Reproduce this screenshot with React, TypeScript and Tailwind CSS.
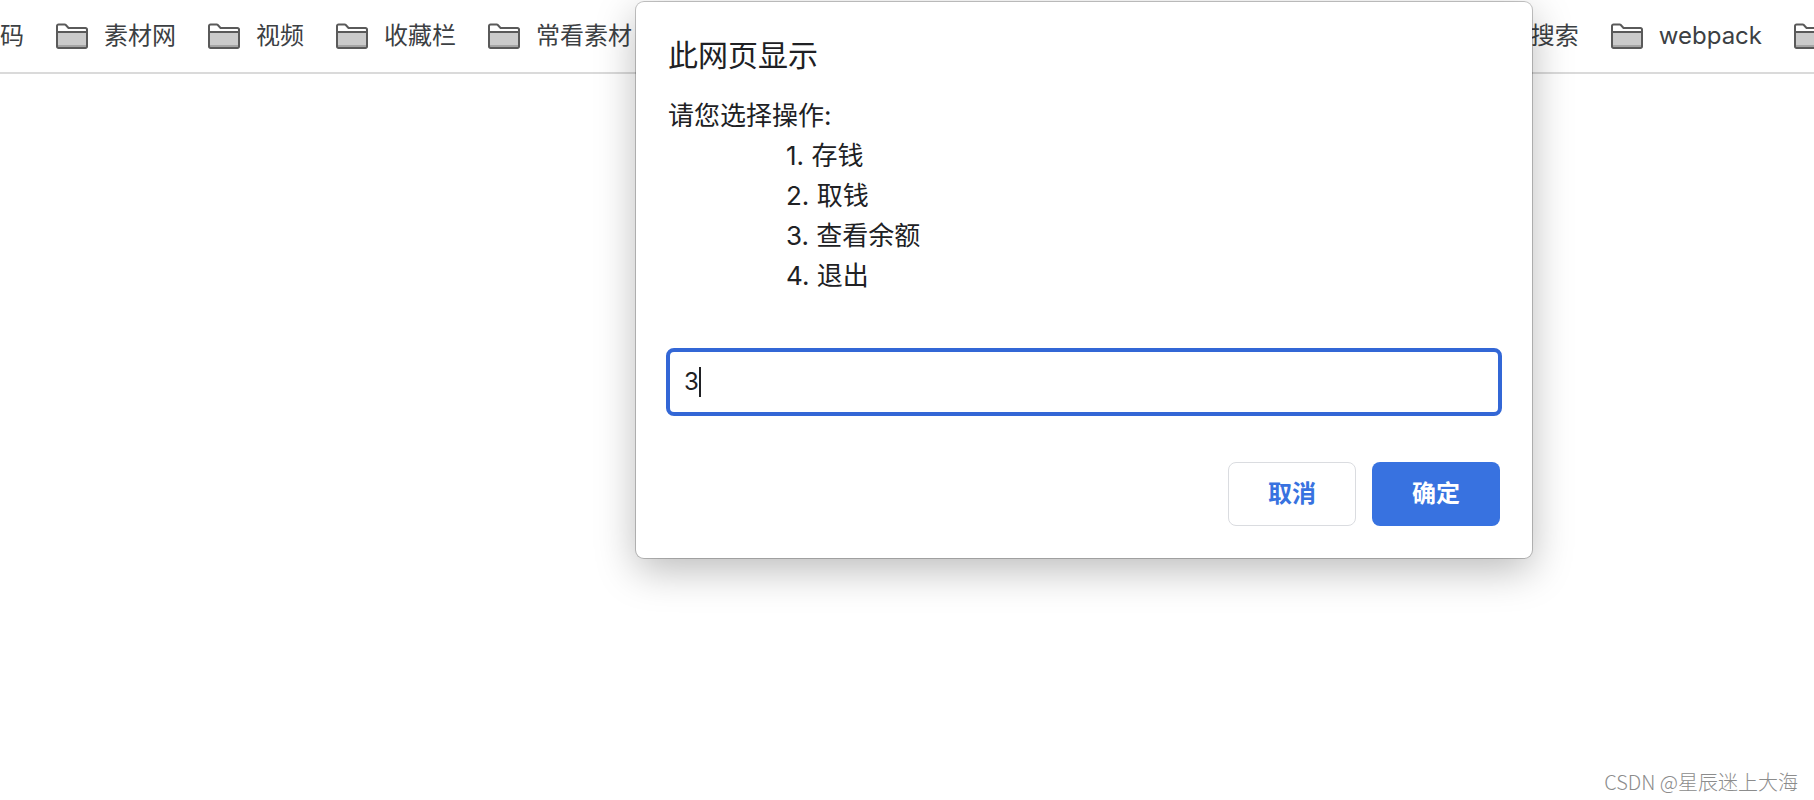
import React, { useState } from 'react';

const bookmarksLeft = ['素材网', '视频', '收藏栏', '常看素材'];
const operations = ['存钱', '取钱', '查看余额', '退出'];

const FolderIcon = () => (
  <svg className="w-8 h-[26px] shrink-0" viewBox="0 0 32 26" fill="none" aria-hidden="true">
    <path d="M1 9h30v15H1Z" fill="#cbcbcb" />
    <path d="M2 22h28v2H2Z" fill="#a6a6a6" />
    <path
      d="M1 3a1.500 1.500 0 0 1 1.500-1.500h6.200a1.500 1.500 0 0 1 1.100.5L12.500 5h17a1.500 1.500 0 0 1 1.500 1.500v17a1.500 1.500 0 0 1-1.500 1.500h-27a1.500 1.500 0 0 1-1.500-1.500Z"
      stroke="#5a5a5a"
      strokeWidth="2"
    />
    <path d="M1 9h30" stroke="#5a5a5a" strokeWidth="2" />
  </svg>
);

const Bookmark: React.FC<{ name: string }> = ({ name }) => (
  <a href="#" className="flex items-center gap-4 whitespace-nowrap">
    <FolderIcon />
    {name}
  </a>
);

const App: React.FC = () => {
  const [value, setValue] = useState('3');

  return (
    <div className="relative min-h-screen flex flex-col overflow-hidden bg-white font-['Inter','Noto_Sans_CJK_SC',sans-serif] text-[#202124]">
      <nav className="flex justify-between border-b-2 border-[#dadada] h-[74px] text-2xl text-[#3c4043]">
        <div className="flex items-center gap-8">
          <a href="#">码</a>
          {bookmarksLeft.map((name) => (
            <Bookmark key={name} name={name} />
          ))}
        </div>
        {/* l'ultima cartella esce dal bordo destro */}
        <div className="flex items-center gap-8 -mr-3">
          <a href="#">搜索</a>
          <Bookmark name="webpack" />
          <a href="#" aria-label="书签">
            <FolderIcon />
          </a>
        </div>
      </nav>

      <main className="grow" />

      <form
        role="dialog"
        aria-labelledby="prompt-title"
        onSubmit={(e) => e.preventDefault()}
        className="absolute left-[636px] top-[2px] w-[896px] rounded-lg bg-white px-8 pt-8 pb-8 shadow-[0_0_0_1px_rgba(0,0,0,0.22),0_12px_40px_rgba(0,0,0,0.27)]"
      >
        <h1 id="prompt-title" className="text-[30px] leading-[42px]">
          此网页显示
        </h1>
        <div className="mt-5 text-[26px] leading-[40px]">
          <p>请您选择操作:</p>
          <ol className="pl-[118px]">
            {operations.map((op, i) => (
              <li key={op}>
                {i + 1}. {op}
              </li>
            ))}
          </ol>
        </div>

        <label className="mt-[52px] -mx-0.5 flex h-[68px] items-center rounded-lg border-4 border-[#3367d6] px-3.5 text-2xl">
          <input
            type="text"
            aria-label="请您选择操作"
            value={value}
            onChange={(e) => setValue(e.target.value)}
            className="field-sizing-content outline-none caret-transparent"
          />
          <span className="h-[30px] w-0.5 bg-[#202124]" />
        </label>

        <div className="mt-[46px] flex justify-end gap-4 text-2xl font-bold">
          <button type="button" className="h-16 w-32 rounded-lg border border-[#dadce0] text-[#3872e0]">
            取消
          </button>
          <button type="submit" className="h-16 w-32 rounded-lg bg-[#3872e0] text-white">
            确定
          </button>
        </div>
      </form>

      <footer className="px-4 pb-1 text-right font-['Noto_Sans_CJK_SC',sans-serif] text-xl leading-7 font-light text-[#8c8c8c]">
        CSDN @星辰迷上大海
      </footer>
    </div>
  );
};

export default App;
